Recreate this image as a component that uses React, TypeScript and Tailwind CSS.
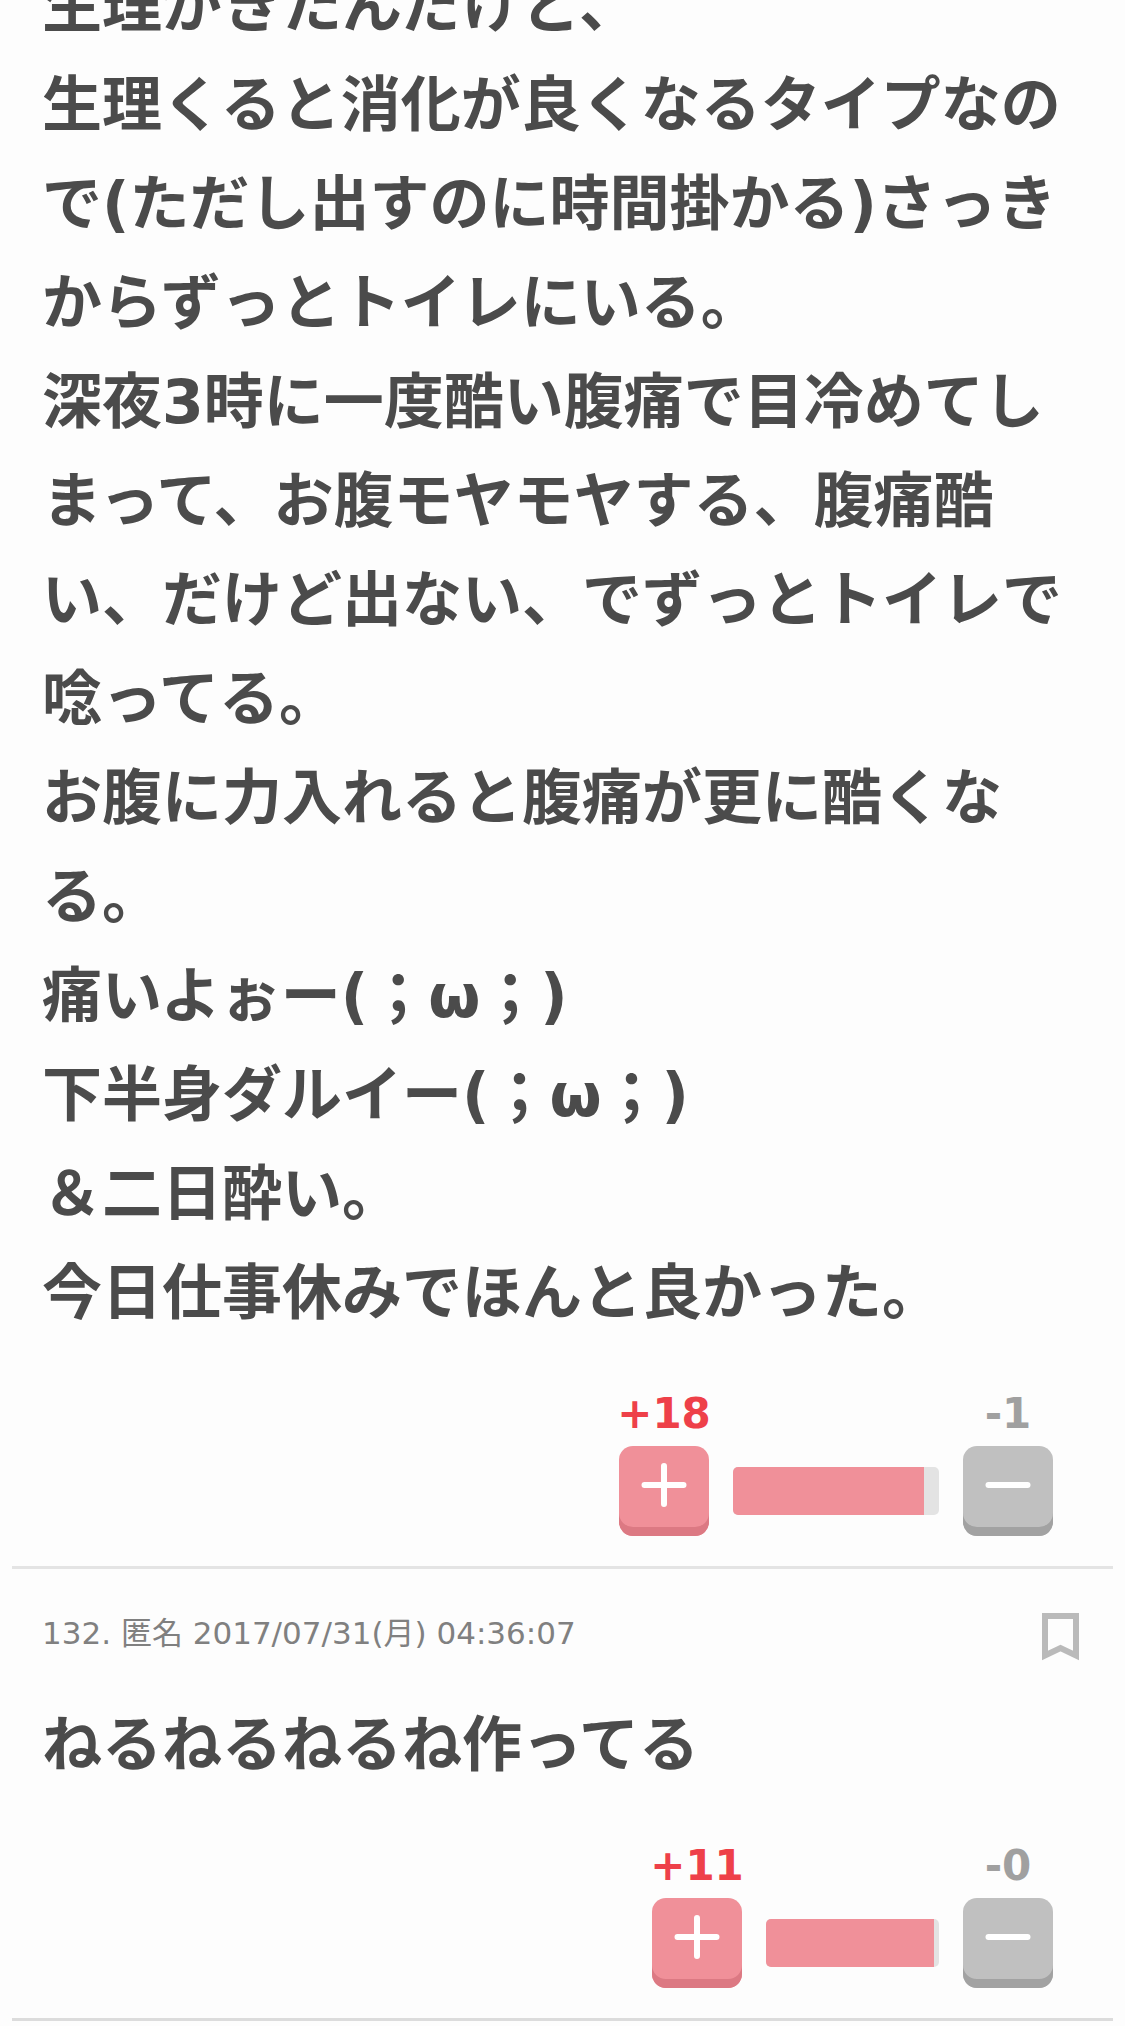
import React from 'react';

type VoteProps = {
  plus: number;
  minus: number;
  barWidth: string;
  rate: number;
};

const PlusIcon = () => (
  <svg width="46" height="46" viewBox="0 0 46 46" fill="none" stroke="#fff" strokeWidth="6" strokeLinecap="round" aria-hidden="true">
    <path d="M3.5 23h39M23 4v38" />
  </svg>
);

const MinusIcon = () => (
  <svg width="46" height="46" viewBox="0 0 46 46" fill="none" stroke="#fff" strokeWidth="6" strokeLinecap="round" aria-hidden="true">
    <path d="M3.5 23h39" />
  </svg>
);

const BookmarkIcon = () => (
  <svg width="37" height="48" viewBox="0 0 37 48" fill="none" stroke="#bababa" strokeWidth="6" aria-hidden="true">
    <path d="M3 3h31v39.5L18.5 35 3 42.5z" />
  </svg>
);

const Votes = ({ plus, minus, barWidth, rate }: VoteProps) => (
  <div className="mt-[39px] mr-[30px] flex items-end justify-end gap-6">
    <div className="flex w-[90px] flex-col items-center">
      <span className="text-[42px] leading-[64px] font-bold text-[#ee4049]">+{plus}</span>
      <button
        type="button"
        aria-label="プラス"
        className="flex h-[90px] w-full items-center justify-center rounded-[14px] bg-[#f09099] pb-3 shadow-[inset_0_-9px_0_#dc7983]"
      >
        <PlusIcon />
      </button>
    </div>

    <div className={`mb-[21px] h-12 overflow-hidden rounded-[5px] bg-[#e3e3e3] ${barWidth}`}>
      <div className="h-full bg-[#f09099]" style={{ width: `${rate}%` }} />
    </div>

    <div className="flex w-[90px] flex-col items-center">
      <span className="text-[42px] leading-[64px] font-bold text-[#a0a0a0]">-{minus}</span>
      <button
        type="button"
        aria-label="マイナス"
        className="flex h-[90px] w-full items-center justify-center rounded-[14px] bg-[#c0c0c0] pb-3 shadow-[inset_0_-9px_0_#a2a2a2]"
      >
        <MinusIcon />
      </button>
    </div>
  </div>
);

const App = () => {
  return (
    <main className="min-h-screen overflow-hidden bg-[#fdfdfd] px-3 font-['DejaVu_Sans','Noto_Sans_CJK_JP',sans-serif]" lang="ja">
      {/* Comment 131, already scrolled past its first line */}
      <article className="-mt-[43px] border-b-3 border-[#e4e4e4] px-[30px] pb-[30px]">
        <p className="text-[60px] leading-[99px] font-bold text-[#4b4b4b]">
          生理がきたんだけど、
          <br />
          生理くると消化が良くなるタイプなので(ただし出すのに時間掛かる)さっきからずっとトイレにいる。
          <br />
          深夜3時に一度酷い腹痛で目冷めてしまって、お腹モヤモヤする、腹痛酷い、だけど出ない、でずっとトイレで唸ってる。
          <br />
          お腹に力入れると腹痛が更に酷くなる。
          <br />
          痛いよぉー(；ω；)
          <br />
          下半身ダルイー(；ω；)
          <br />
          ＆二日酔い。
          <br />
          今日仕事休みでほんと良かった。
        </p>
        <Votes plus={18} minus={1} barWidth="w-[206px]" rate={92.7} />
      </article>

      {/* Comment 132 */}
      <article className="border-b-3 border-[#dcdcdc] px-[30px] pt-[44px] pb-[30px]">
        <header className="flex items-start justify-between pr-1">
          <p className="text-[31px] leading-[40px] text-[#808080]">132. 匿名 2017/07/31(月) 04:36:07</p>
          <button type="button" aria-label="ブックマーク">
            <BookmarkIcon />
          </button>
        </header>
        <p className="mt-[35px] text-[60px] leading-[99px] font-bold text-[#4b4b4b]">ねるねるねるね作ってる</p>
        <Votes plus={11} minus={0} barWidth="w-[173px]" rate={97.1} />
      </article>
    </main>
  );
};

export default App;
